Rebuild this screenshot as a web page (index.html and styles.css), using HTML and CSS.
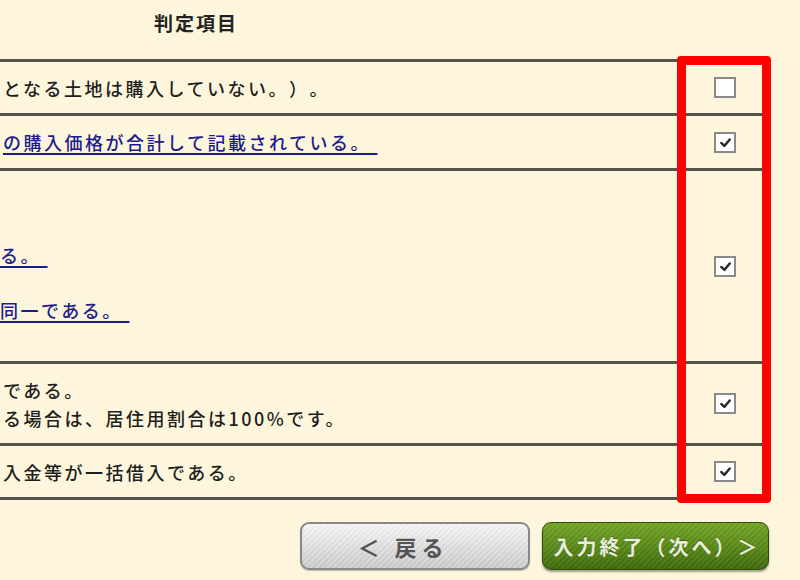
FILE: index.html
```html
<!DOCTYPE html>
<html lang="ja">
<head>
<meta charset="utf-8">
<title>判定項目</title>
<link rel="stylesheet" href="styles.css">
</head>
<body>
<div class="page">
  <div class="head"><div class="head-title">判定項目</div></div>
  <div class="table">
    <div class="row r1">
      <div class="txt">となる土地は購入していない。）。</div>
      <div class="chk"><span class="box"></span></div>
    </div>
    <div class="row r2">
      <div class="txt"><a href="#" class="lnk">の購入価格が合計して記載されている。&nbsp;</a></div>
      <div class="chk"><span class="box"><svg viewBox="0 0 18 18" class="tick"><path d="M4.5 9.5 L7.8 12.6 L13.5 5.8"/></svg></span></div>
    </div>
    <div class="row r3">
      <div class="txt txt-top">
        <div class="ln"><a href="#" class="lnk">る。&nbsp;</a></div>
        <div class="ln ln-gap"><a href="#" class="lnk">同一である。&nbsp;</a></div>
      </div>
      <div class="chk"><span class="box"><svg viewBox="0 0 18 18" class="tick"><path d="M4.5 9.5 L7.8 12.6 L13.5 5.8"/></svg></span></div>
    </div>
    <div class="row r4">
      <div class="txt">
        <div>
          <div class="ln">である。</div>
          <div class="ln">る場合は、居住用割合は100%です。</div>
        </div>
      </div>
      <div class="chk"><span class="box"><svg viewBox="0 0 18 18" class="tick"><path d="M4.5 9.5 L7.8 12.6 L13.5 5.8"/></svg></span></div>
    </div>
    <div class="row r5">
      <div class="txt">入金等が一括借入である。</div>
      <div class="chk"><span class="box"><svg viewBox="0 0 18 18" class="tick"><path d="M4.5 9.5 L7.8 12.6 L13.5 5.8"/></svg></span></div>
    </div>
  </div>
  <div class="actions">
    <button class="btn btn-back" type="button">＜ 戻る</button>
    <button class="btn btn-next" type="button">入力終了（次へ）＞</button>
  </div>
  <div class="highlight"></div>
</div>
</body>
</html>
```

FILE: styles.css
```css
* { box-sizing: border-box; }

html, body {
  margin: 0;
  padding: 0;
  background: #fdf6dc;
}

body {
  font-family: "Noto Sans CJK JP", "Noto Sans", sans-serif;
  color: #1e1e1e;
}

.page {
  position: relative;
  width: 800px;
  height: 580px;
  overflow: hidden;
  background: #fdf6dc;
}

.head {
  height: 59px;
  display: flex;
}

.head-title {
  width: 392px;
  text-align: center;
  font-weight: bold;
  font-size: 19px;
  letter-spacing: 2px;
  line-height: 46px;
  color: #222;
}

.table {
  width: 766px;
  border-bottom: 3px solid #55544b;
}

.row {
  display: flex;
  border-top: 3px solid #55544b;
}

.r1 { height: 54px; }
.r2 { height: 55px; }
.r3 { height: 193px; }
.r4 { height: 82px; }
.r5 { height: 54px; }

.txt {
  flex: 0 0 677px;
  display: flex;
  align-items: center;
  padding-left: 3px;
  font-size: 18px;
  font-weight: 500;
  letter-spacing: 2.5px;
  line-height: 28px;
  white-space: nowrap;
  text-spacing-trim: space-all;
}

.txt-top {
  flex-direction: column;
  align-items: flex-start;
  justify-content: flex-start;
  padding-left: 0;
  padding-top: 70px;
}

.ln-gap { margin-top: 27px; }

.lnk {
  color: #1c1c8c;
  text-decoration: underline;
  text-decoration-thickness: 1.5px;
  text-underline-offset: 3px;
}

.chk {
  flex: 1;
  display: flex;
  align-items: center;
  padding-left: 37px;
}

.box {
  width: 22px;
  height: 21px;
  background: #fff;
  border: 2px solid #8a8a8a;
  display: flex;
  align-items: center;
  justify-content: center;
}

.tick {
  width: 17px;
  height: 17px;
  fill: none;
  stroke: #2a2a2a;
  stroke-width: 2.6;
  stroke-linecap: round;
  stroke-linejoin: round;
}

.actions {
  display: flex;
  justify-content: flex-end;
  gap: 12px;
  padding-right: 31px;
  margin-top: 22px;
}

.btn {
  height: 48px;
  border-radius: 9px;
  font-family: "Noto Sans CJK JP", sans-serif;
  font-weight: bold;
  cursor: pointer;
  padding: 0;
  text-spacing-trim: space-all;
}

.btn-back {
  width: 230px;
  border: 2px solid #888;
  background:
    repeating-linear-gradient(135deg, rgba(255,255,255,0.18) 0 2px, rgba(0,0,0,0.02) 2px 4px),
    linear-gradient(#f4f4f4, #dcdcdc 55%, #c9c9c9);
  color: #545454;
  font-size: 22px;
  letter-spacing: 5px;
  padding-right: 24px;
  box-shadow: 0 1px 1px rgba(0,0,0,0.25);
}

.btn-next {
  width: 227px;
  border: 1px solid #2f4d08;
  background:
    repeating-linear-gradient(135deg, rgba(255,255,255,0.06) 0 2px, rgba(0,0,0,0.03) 2px 4px),
    linear-gradient(#74a424, #5a8a18 50%, #3e6a0b);
  color: #e8eedb;
  font-size: 20px;
  letter-spacing: 3px;
  padding-left: 3px;
  text-shadow: 0 -1px 0 rgba(0,0,0,0.35);
  box-shadow: 0 2px 2px rgba(0,0,0,0.35);
}

.highlight {
  position: absolute;
  left: 677px;
  top: 56px;
  width: 94px;
  height: 447px;
  border: 9px solid #ff0000;
  border-radius: 4px;
  pointer-events: none;
}
```
